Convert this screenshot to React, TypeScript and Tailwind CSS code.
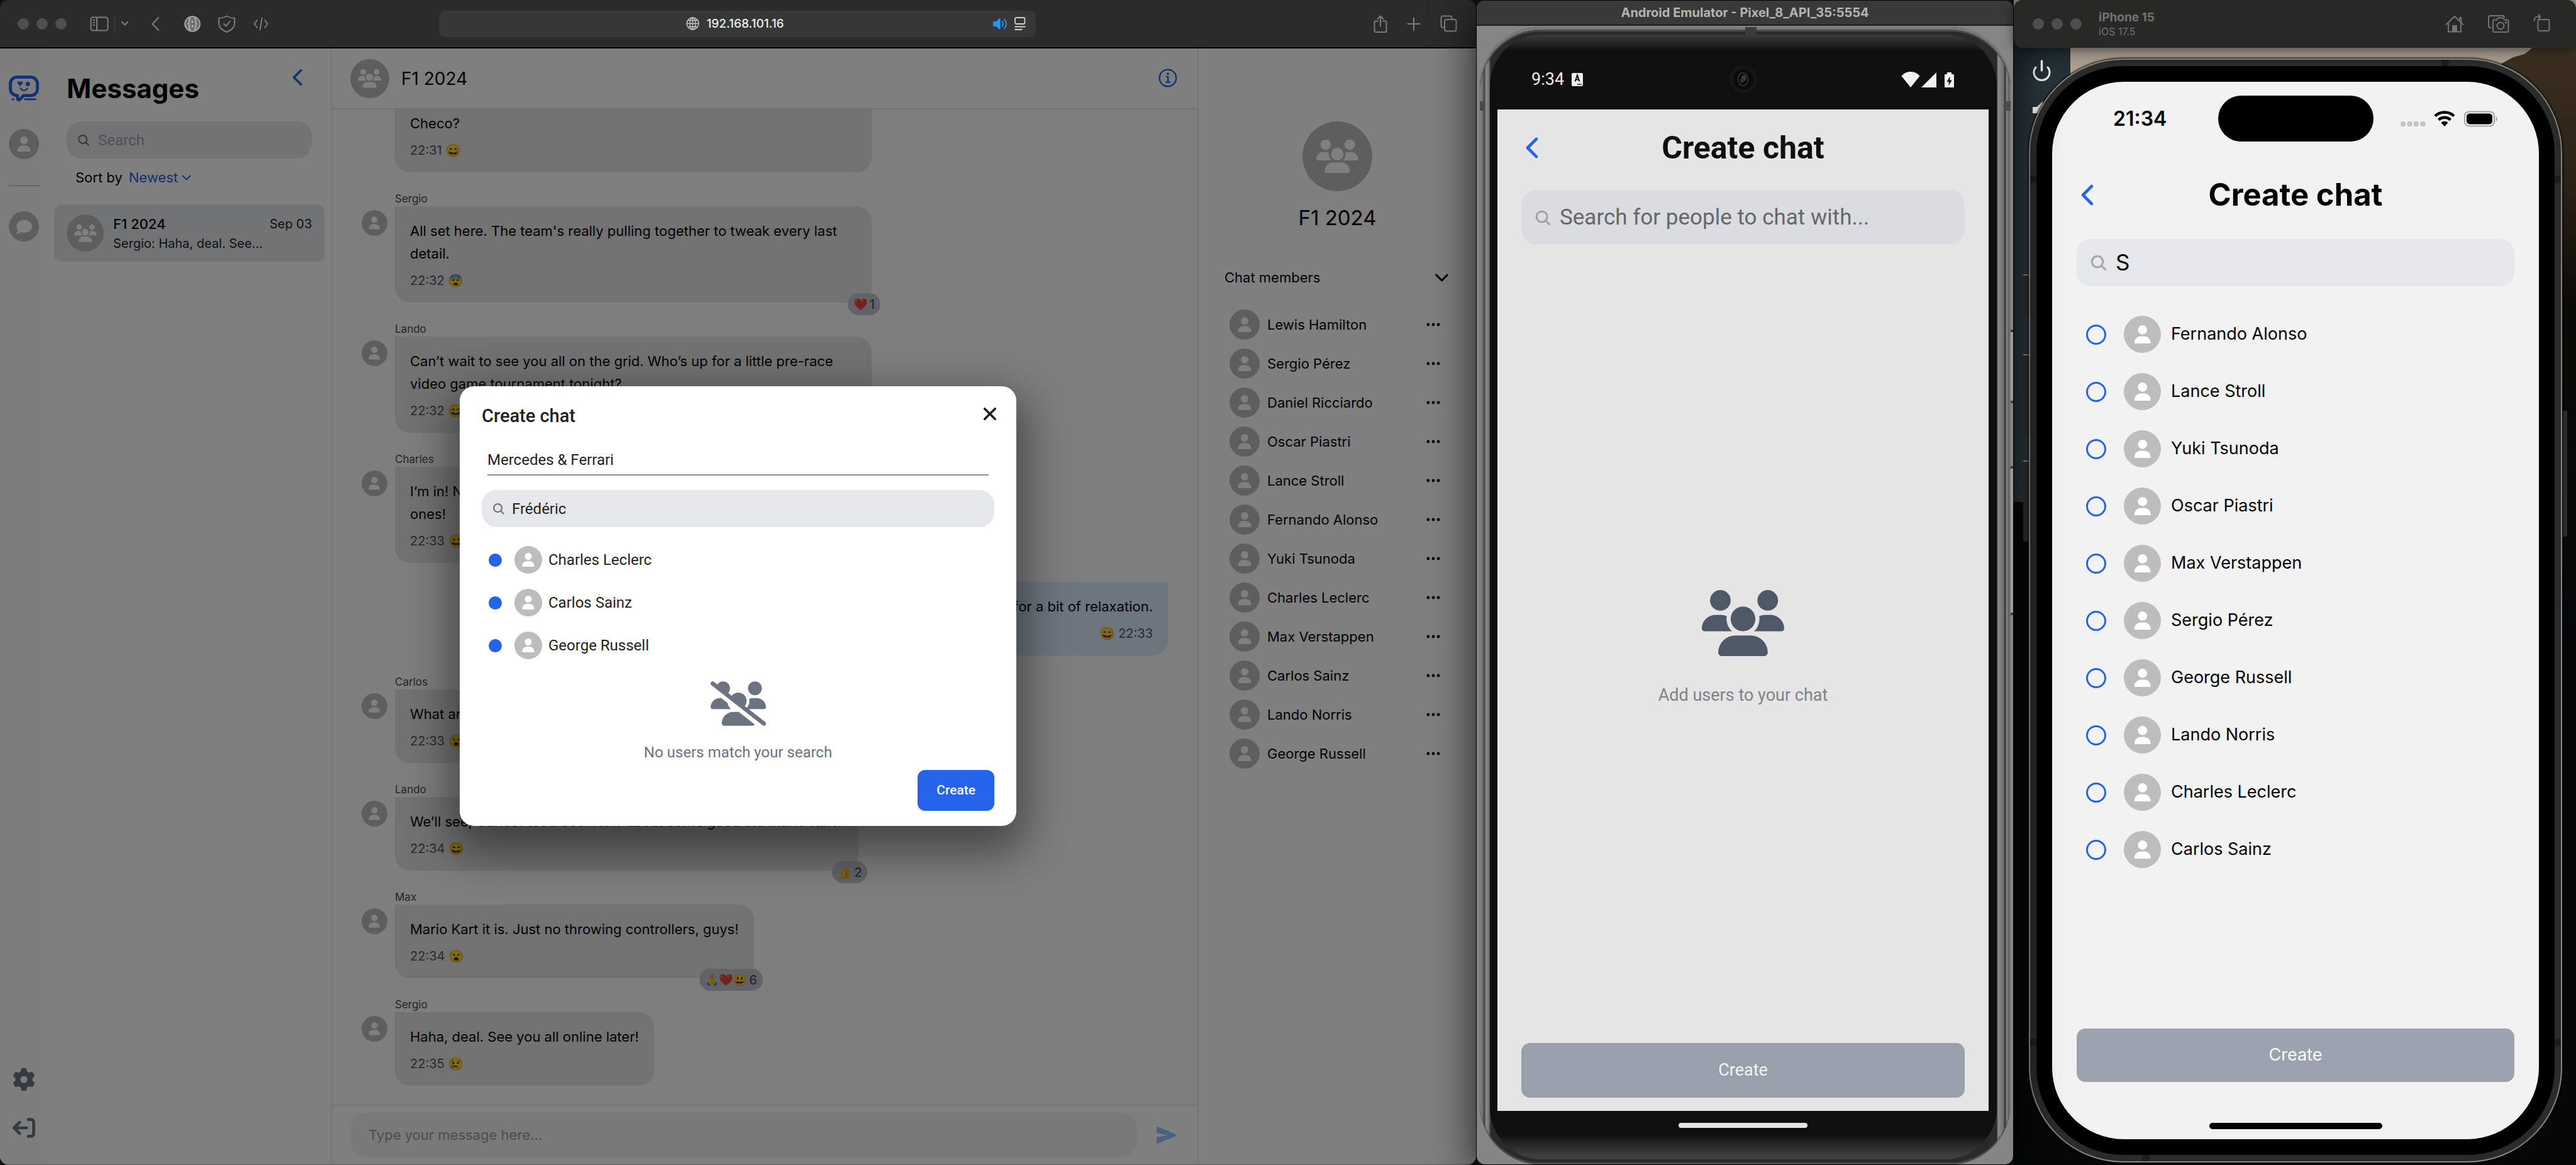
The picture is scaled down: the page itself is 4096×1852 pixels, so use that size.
import React from "react";
import { FaUser, FaUsers, FaUsersSlash, FaGear, FaComment } from "react-icons/fa6";
import {
  IoChevronBack,
  IoChevronDown,
  IoSearch,
  IoClose,
  IoInformationCircleOutline,
  IoSend,
} from "react-icons/io5";
import { BsThreeDots } from "react-icons/bs";

const SANS = "font-['Inter','Liberation_Sans',sans-serif]";
const ROBOTO = "font-['Roboto','Liberation_Sans',sans-serif]";

function Avatar({ size, children }: { size: string; children?: React.ReactNode }) {
  return (
    <span className={`flex shrink-0 items-center justify-center rounded-full bg-[#bdbdbd] text-white ${size}`}>
      {children ?? <FaUser className="h-1/2 w-1/2" />}
    </span>
  );
}

function GroupAvatar({ size }: { size: string }) {
  return (
    <Avatar size={size}>
      <FaUsers className="h-[60%] w-[60%]" />
    </Avatar>
  );
}

function TrafficLights({ color }: { color: string }) {
  return (
    <div className="flex gap-3">
      {[0, 1, 2].map((i) => (
        <span key={i} className={`size-[18px] rounded-full ${color}`} />
      ))}
    </div>
  );
}

/* ---------- Browser ---------- */

function BrowserToolbar() {
  return (
    <header className="flex h-[77px] shrink-0 items-center justify-between rounded-t-[14px] border-b-2 border-black bg-[#2b2b2b] text-[#7c7c7c]">
      <div className="flex flex-1 items-center pl-7">
        <TrafficLights color="bg-[#4f4f4f]" />
        <button aria-label="Show sidebar" className="ml-[37px]">
          <svg className="h-[24px] w-[30px]" viewBox="0 0 30 24" fill="none" stroke="currentColor" strokeWidth="2">
            <rect x="1.5" y="1.5" width="27" height="21" rx="3.5" />
            <path d="M11 1.5v21M4.5 6h3.5M4.5 10h3.5M4.5 14h3.5" />
          </svg>
        </button>
        <span className="ml-[9px] h-[26px] w-px bg-[#454545]" />
        <button aria-label="Tab groups" className="ml-[9px]">
          <svg className="h-[9px] w-[13px]" viewBox="0 0 13 9" fill="none" stroke="currentColor" strokeWidth="2.2" strokeLinecap="round" strokeLinejoin="round">
            <path d="M2 2l4.500 4.500L11 2" />
          </svg>
        </button>
        <button aria-label="Back" className="ml-[35px]">
          <svg className="h-[24px] w-[14px]" viewBox="0 0 14 24" fill="none" stroke="currentColor" strokeWidth="2.2" strokeLinecap="round" strokeLinejoin="round">
            <path d="M12 2L2.500 12l9.500 10" />
          </svg>
        </button>
        <button aria-label="Extension" className="ml-[39px]">
          <svg className="size-[26px]" viewBox="0 0 26 26" fill="none" stroke="currentColor">
            <circle cx="13" cy="13" r="12" stroke="#b4b4b4" strokeWidth="1.600" fill="#6f6f6f" />
            <path d="M10.500 4c-3 0-2.500 1.500-2.500 4.500S7.500 13 6 13c1.500 0 2 1.500 2 4.500s-.5 4.500 2.500 4.500M15.500 4c3 0 2.500 1.500 2.500 4.500s.5 4.500 2 4.500c-1.500 0-2 1.500-2 4.500s.5 4.500-2.500 4.500" stroke="#c2c2c2" strokeWidth="1.500" />
            <circle cx="13" cy="9.500" r="1.600" fill="#c2c2c2" stroke="none" />
            <circle cx="13" cy="16.500" r="1.600" fill="#c2c2c2" stroke="none" />
          </svg>
        </button>
        <button aria-label="Privacy report" className="ml-[27px]">
          <svg className="h-[28px] w-[29px]" viewBox="0 0 29 28" fill="none" stroke="currentColor" strokeWidth="2" strokeLinecap="round" strokeLinejoin="round">
            <path d="M14.500 1.500C18 3.500 22 4.500 27 5v8c0 6-5 11-12.500 14C7 24 2 19 2 13V5c5-.5 9-1.500 12.500-3.500z" />
            <path d="M10 14l3.500 3.500L19.500 10" />
          </svg>
        </button>
        <button aria-label="Developer tools" className="ml-7">
          <svg className="h-[22px] w-[24px]" viewBox="0 0 24 22" fill="none" stroke="currentColor" strokeWidth="2" strokeLinecap="round" strokeLinejoin="round">
            <path d="M6 5L1.500 11 6 17M18 5l4.500 6L18 17M13.500 1.500l-3 19" />
          </svg>
        </button>
      </div>

      <div className="flex h-[42px] w-[40.4%] items-center rounded-[9px] bg-[#373737] pr-4">
        <div className="flex flex-1 items-center justify-center gap-[11px] pl-[58px]">
          <svg className="size-[21px] text-[#c9c9c9]" viewBox="0 0 21 21" fill="none" stroke="currentColor" strokeWidth="1.400">
            <circle cx="10.500" cy="10.500" r="9.500" />
            <ellipse cx="10.500" cy="10.500" rx="4.500" ry="9.500" />
            <path d="M10.500 1v19M1 10.500h19M2.500 5.500h16M2.500 15.500h16" />
          </svg>
          <span className="text-[19px] leading-6 font-medium text-[#ececec]">192.168.101.16</span>
        </div>
        <button aria-label="Mute tab" className="-ml-1 text-[#1e9bff]">
          <svg className="h-[22px] w-[24px]" viewBox="0 0 24 22" fill="currentColor">
            <path d="M1 8.500C1 7.500 1.500 7 2.500 7H6l5-4.500c1-.8 1.500-.4 1.500.7v15.600c0 1.100-.5 1.500-1.500.7L6 15H2.500C1.500 15 1 14.500 1 13.500z" />
            <path d="M15.500 7c2 2.500 2 5.500 0 8M19 4c4 4.500 4 9.500 0 14" fill="none" stroke="currentColor" strokeWidth="1.800" strokeLinecap="round" />
          </svg>
        </button>
        <button aria-label="Reader" className="ml-[11px] text-[#cfcfcf]">
          <svg className="h-[21px] w-[18px]" viewBox="0 0 18 21" fill="none" stroke="currentColor" strokeWidth="1.800">
            <rect x="1" y="1" width="15.500" height="10" rx="2" />
            <path d="M.5 15.500h17M.5 20h12" />
          </svg>
        </button>
      </div>

      <div className="flex flex-1 items-center justify-end gap-[31px] pr-[30px]">
        <button aria-label="Share">
          <svg className="h-[28px] w-[22px]" viewBox="0 0 22 28" fill="none" stroke="currentColor" strokeWidth="2" strokeLinecap="round" strokeLinejoin="round">
            <path d="M7 9.500H3.500c-1 0-2 1-2 2V25c0 1 1 2 2 2h15c1 0 2-1 2-2V11.500c0-1-1-2-2-2H15M11 18V2M6.500 6L11 1.500 15.500 6" />
          </svg>
        </button>
        <button aria-label="New tab">
          <svg className="size-[22px]" viewBox="0 0 22 22" fill="none" stroke="currentColor" strokeWidth="2.200" strokeLinecap="round">
            <path d="M11 1.500v19M1.500 11h19" />
          </svg>
        </button>
        <button aria-label="Tab overview">
          <svg className="size-[27px]" viewBox="0 0 27 27" fill="none" stroke="currentColor" strokeWidth="2">
            <path d="M6 19.500H4C2.500 19.500 1.500 18.500 1.500 17V4c0-1.500 1-2.500 2.500-2.500h12c1.500 0 2.500 1 2.500 2.500v2" />
            <rect x="7" y="7" width="18.500" height="18.500" rx="3" />
          </svg>
        </button>
      </div>
    </header>
  );
}

function Rail() {
  return (
    <nav className="flex w-[76px] shrink-0 flex-col items-center bg-[#fbfbfb] pt-[43px] pb-[41px]">
      <a href="#home" aria-label="Home" className="text-[#2563eb]">
        <svg className="h-[41px] w-[48px]" viewBox="0 0 192 163" fill="none" stroke="currentColor">
          <path d="M52 10H140a42 42 0 0 1 42 42V85a42 42 0 0 1-42 42H94L72 150c-6 7-17 4-17-6V127H52A42 42 0 0 1 10 85V52A42 42 0 0 1 52 10z" strokeWidth="19" strokeLinejoin="round" />
          <path d="M72 67L57 51c-7-8 4-18 12-12l3 3 3-3c8-6 19 4 12 12z" fill="currentColor" stroke="none" />
          <circle cx="121" cy="53" r="14" fill="currentColor" stroke="none" />
          <path d="M74 80c12 19 34 19 46 0" strokeWidth="8" strokeLinecap="round" />
          <path d="M23 151h7M103 151h66" strokeWidth="11" strokeLinecap="round" />
        </svg>
      </a>
      <a href="#profile" aria-label="Profile" className="mt-11">
        <Avatar size="size-[48px]" />
      </a>
      <span className="mt-[41px] h-[2px] w-[49px] bg-[#c9ccd4]" />
      <a href="#chats" aria-label="Chats" className="mt-10">
        <Avatar size="size-[48px]">
          <FaComment className="size-[25px]" />
        </Avatar>
      </a>
      <button aria-label="Settings" className="mt-auto text-[#6b7280]">
        <FaGear className="size-[36px]" />
      </button>
      <button aria-label="Log out" className="mt-[43px] text-[#6b7280]">
        <svg className="h-[32px] w-[36px]" viewBox="0 0 145 127" fill="none" stroke="currentColor" strokeWidth="19" strokeLinecap="round" strokeLinejoin="round">
          <path d="M100 9.500h18a17 17 0 0 1 17 17v74a17 17 0 0 1-17 17h-18M90 63.500H10M45 28L9.500 63.500 45 99" />
        </svg>
      </button>
    </nav>
  );
}

function Conversations() {
  return (
    <aside className="flex w-[452px] shrink-0 flex-col border-r-2 border-[#ececec] bg-white px-[10px]">
      <div className="flex items-start justify-between px-5 pt-[26px]">
        <h1 className="pt-3 text-[42px] leading-[52px] font-bold">Messages</h1>
        <button aria-label="Collapse" className="pr-[3px] text-[#2563eb]">
          <IoChevronBack className="size-[40px]" />
        </button>
      </div>
      <label className={`mx-5 mt-[26px] flex h-[59px] items-center gap-3 rounded-[24px] bg-[#e5e7eb] pl-4 ${ROBOTO}`}>
        <IoSearch className="size-[22px] text-[#757575]" />
        <input aria-label="Search" placeholder="Search" className="min-w-0 flex-1 bg-transparent text-[24px] outline-none placeholder:text-[#9ca3af]" />
      </label>
      <div className="mt-4 flex items-center gap-[10px] px-[34px] text-[22px] leading-7">
        <span>Sort by</span>
        <button className="flex items-center gap-[3px] text-[#2563eb]">
          Newest
          <IoChevronDown className="size-[21px]" />
        </button>
      </div>
      <a href="#f1" className="mt-[29px] flex h-[91px] items-center gap-[15px] rounded-[12px] bg-[#e5e7eb] px-5">
        <GroupAvatar size="size-[59px]" />
        <span className="flex flex-1 flex-col">
          <span className="flex justify-between text-[22px] leading-8">
            <span className="font-medium">F1 2024</span>
            <span className="text-[20px] text-[#1f1f1f]">Sep 03</span>
          </span>
          <span className="text-[20px] leading-[30px] text-[#1f1f1f]">Sergio: Haha, deal. See...</span>
        </span>
      </a>
    </aside>
  );
}

type Message = {
  own?: boolean;
  author?: string;
  text: string;
  time: string;
  mood: string;
  reactions?: string;
  count?: number;
};

const messages: Message[] = [
  { text: "Hello all! The car felt solid in the sim. How are things at Red Bull, Checo?", time: "22:31", mood: "😄" },
  { author: "Sergio", text: "All set here. The team's really pulling together to tweak every last detail.", time: "22:32", mood: "😨", reactions: "❤️", count: 1 },
  { author: "Lando", text: "Can’t wait to see you all on the grid. Who’s up for a little pre-race video game tournament tonight?", time: "22:32", mood: "😄" },
  { author: "Charles", text: "I’m in! No better way to unwind before the big races than the small ones!", time: "22:33", mood: "😄" },
  { own: true, text: "Count me in, I could use the games for a bit of relaxation.", time: "22:33", mood: "😄" },
  { author: "Carlos", text: "What are we playing tonight?", time: "22:33", mood: "😮" },
  { author: "Lando", text: "We’ll see, Carlos. We’ll see. How about some good old Mario Kart?", time: "22:34", mood: "😄", reactions: "👍", count: 2 },
  { author: "Max", text: "Mario Kart it is. Just no throwing controllers, guys!", time: "22:34", mood: "😮", reactions: "🙏❤️😃", count: 6 },
  { author: "Sergio", text: "Haha, deal. See you all online later!", time: "22:35", mood: "😢" },
];

function MessageRow({ m }: { m: Message }) {
  if (m.own) {
    return (
      <div className="ml-auto max-w-[758px] rounded-[24px] rounded-tr-none bg-[#dbeafe] px-6 pt-[21px] pb-5">
        <p className="text-[22px] leading-9">{m.text}</p>
        <p className="mt-[10px] text-right text-[20px] leading-[30px] text-[#4b5563]">
          {m.mood} {m.time}
        </p>
      </div>
    );
  }
  return (
    <div className="flex items-start gap-3">
      <span className="mt-[30px] w-[41px] shrink-0">{m.author && <Avatar size="size-[41px]" />}</span>
      <div className="flex flex-col items-start">
        {m.author && <span className="text-[17px] leading-6 text-[#4b4b4b]">{m.author}</span>}
        <div className="relative max-w-[758px] rounded-[24px] rounded-tl-none bg-[#e5e5e5] px-6 pt-[21px] pb-5">
          <p className="text-[22px] leading-9">{m.text}</p>
          <p className="mt-[10px] text-[20px] leading-[30px] text-[#4b5563]">
            {m.time} {m.mood}
          </p>
          {m.reactions && (
            <span className="absolute -right-[14px] -bottom-5 flex h-[35px] items-center gap-1 rounded-full bg-[#c3c6d0] px-[9px] text-[20px] text-[#374151]">
              <span className="text-[18px]">{m.reactions}</span>
              <span>{m.count}</span>
            </span>
          )}
        </div>
      </div>
    </div>
  );
}

function Chat() {
  return (
    <main className="flex min-w-0 flex-1 flex-col bg-[#fcfcfc]">
      <header className="flex h-[97px] shrink-0 items-center border-b-2 border-[#e5e5e5] bg-white pr-7 pl-[29px]">
        <GroupAvatar size="size-[62px]" />
        <h2 className="ml-[19px] flex-1 text-[28px]">F1 2024</h2>
        <button aria-label="Chat info" className="text-[#2563eb]">
          <IoInformationCircleOutline className="size-[37px]" />
        </button>
      </header>
      <div className="flex min-h-0 flex-1 flex-col justify-end gap-[30px] overflow-hidden pr-[47px] pb-[30px] pl-[47px]">
        {messages.map((m, i) => (
          <MessageRow key={i} m={m} />
        ))}
      </div>
      <footer className="flex h-[94px] shrink-0 items-center border-t-2 border-[#e5e5e5] bg-white pr-[33px] pl-[30px]">
        <input
          aria-label="Message"
          placeholder="Type your message here..."
          className="h-[70px] min-w-0 flex-1 rounded-[24px] bg-[#f3f3f3] px-7 text-[22px] outline-none placeholder:text-[#9a9a9a]"
        />
        <button aria-label="Send" className="ml-[30px] text-[#93c5fd]">
          <IoSend className="size-[33px]" />
        </button>
      </footer>
    </main>
  );
}

const members = [
  "Lewis Hamilton", "Sergio Pérez", "Daniel Ricciardo", "Oscar Piastri", "Lance Stroll", "Fernando Alonso",
  "Yuki Tsunoda", "Charles Leclerc", "Max Verstappen", "Carlos Sainz", "Lando Norris", "George Russell",
];

function Details() {
  return (
    <aside className="flex w-[443px] shrink-0 flex-col items-center border-l-2 border-[#ececec] bg-white pt-[116px]">
      <GroupAvatar size="size-[111px]" />
      <h2 className="mt-[22px] text-[33px] leading-[40px]">F1 2024</h2>
      <button className="mt-[57px] flex w-full items-center justify-between pr-[39px] pl-[41px] text-[22px] leading-9">
        Chat members
        <IoChevronDown className="size-[31px]" />
      </button>
      <ul className="mt-[26px] w-full pr-[55px] pl-[49px]">
        {members.map((name) => (
          <li key={name} className="flex h-[62px] items-center text-[22px]">
            <Avatar size="size-[48px]" />
            <span className="ml-3 flex-1">{name}</span>
            <button aria-label={`Options for ${name}`}>
              <BsThreeDots className="size-[26px]" />
            </button>
          </li>
        ))}
      </ul>
    </aside>
  );
}

function CreateChatDialog() {
  return (
    <div className="absolute inset-0 flex items-center justify-center bg-black/50">
      <div
        role="dialog"
        aria-label="Create chat"
        className={`flex w-[885px] flex-col rounded-[23px] bg-white px-[35px] pt-7 pb-6 text-[#1f1f1f] shadow-[0_28px_70px_14px_rgba(0,0,0,0.45)] ${ROBOTO}`}
      >
        <div className="flex h-10 items-center justify-between">
          <h2 className="text-[29px] font-medium">Create chat</h2>
          <button aria-label="Close" className="-mt-2 -mr-3">
            <IoClose className="size-[38px]" />
          </button>
        </div>
        <input aria-label="Chat name" defaultValue="Mercedes & Ferrari" className="mx-[9px] mt-[26px] h-12 border-b-2 border-[#8e8e8e] text-[24px] outline-none" />
        <label className="mt-[23px] flex h-[59px] items-center gap-[10px] rounded-[24px] bg-[#e5e7eb] pl-4">
          <IoSearch className="size-[22px] text-[#757575]" />
          <input aria-label="Search users" defaultValue="Frédéric" className="min-w-0 flex-1 bg-transparent text-[24px] outline-none" />
        </label>
        <ul className="mt-[18px]">
          {["Charles Leclerc", "Carlos Sainz", "George Russell"].map((name) => (
            <li key={name}>
              <label className="flex h-[68px] items-center pl-[11px] text-[24px]">
                <input type="checkbox" defaultChecked className="size-[21px] appearance-none rounded-full border-[3px] border-[#2563eb] checked:bg-[#2563eb]" />
                <span className="mr-[10px] ml-5">
                  <Avatar size="size-[44px]" />
                </span>
                {name}
              </label>
            </li>
          ))}
        </ul>
        <div className="mt-[23px] flex flex-col items-center text-[#6b7280]">
          <FaUsersSlash className="h-[71px] w-[88px]" />
          <p className="mt-[26px] text-[24px] leading-8">No users match your search</p>
        </div>
        <button className="mt-3 h-[65px] self-end rounded-[12px] bg-[#2563eb] px-[30px] text-[21px] font-medium text-white">Create</button>
      </div>
    </div>
  );
}

function BrowserWindow() {
  return (
    <section className={`flex min-w-0 flex-col overflow-hidden rounded-b-[14px] border-b-2 border-[#6b6b6b] text-black ${SANS}`}>
      <BrowserToolbar />
      <div className="relative flex min-h-0 flex-1 overflow-hidden">
        <Rail />
        <Conversations />
        <Chat />
        <Details />
        <CreateChatDialog />
      </div>
    </section>
  );
}

/* ---------- Android ---------- */

function AndroidWindow() {
  return (
    <section className={`relative z-10 flex min-w-0 flex-col overflow-hidden rounded-[14px] border border-black bg-[#858585] shadow-[0_20px_70px_rgba(0,0,0,0.75)] ${ROBOTO}`}>
      <header className={`flex h-10 shrink-0 items-center justify-center border-b-2 border-[#1c1c1c] bg-[#393939] pb-px text-[20px] leading-6 font-bold text-[#b3b3b3] ${SANS}`}>
        Android Emulator - Pixel_8_API_35:5554
      </header>
      <span className="absolute top-[523px] right-0 h-[117px] w-[6px] rounded-l-[2px] border-y-4 border-[#3c3c3c] bg-[#9d9d9d]" />
      <span className="absolute top-[740px] right-0 h-[237px] w-[6px] rounded-l-[2px] border-y-4 border-[#3c3c3c] bg-[#9d9d9d]" />
      <div className="relative mt-[2px] mr-1 ml-[5px] flex min-h-0 flex-1 flex-col rounded-[96px] bg-[linear-gradient(90deg,#8c8c8c_0px,#6a6a6a_5px,#3d3d3d_7px,#8c8c8c_10px,#6d6d6d_15px,#2a2a2a_17px,#2a2a2a_calc(100%-22px),#8c8c8c_calc(100%-20px),#6e6e6e_calc(100%-11px),#2a2a2a_calc(100%-9px),#8a8a8a_calc(100%-6px),#5c5c5c_calc(100%-3px),#8c8c8c_100%)] pt-3 pr-[22px] pb-[8px] pl-4 shadow-[inset_0_4px_1px_#7a7a7a,inset_0_7px_1px_#4c4c4c,inset_0_-3px_1px_#4c4c4c]">
        <span className="absolute top-0 left-1/2 h-[12px] w-[18px] bg-[#3c3c3c]" />
        <span className="absolute top-[118px] left-0 h-[15px] w-[7px] bg-[#4a4a4a]" />
        <span className="absolute top-[118px] right-0 h-[15px] w-[7px] bg-[#4a4a4a]" />
        <div className="relative flex min-h-0 flex-1 flex-col rounded-[82px] bg-[linear-gradient(180deg,#3b3b3b_0px,#0f0f0f_26px,#0f0f0f_calc(100%-40px),#3f3f3f_calc(100%-6px))] pt-[23px] pr-[13px] pb-[31px] pl-3">
          <div className="flex h-24 shrink-0 items-center px-[54px] text-[27px] text-[#ededed]">
            <div className="flex flex-1 items-center gap-3">
              9:34
              <svg className="h-[27px] w-[18px]" viewBox="0 0 18 27">
                <rect y="3" width="18" height="21" rx="2" fill="#ededed" />
                <path d="M5.500 16.500L9 6.500l3.500 10M6.500 13.500h5" stroke="#0f0f0f" strokeWidth="2" fill="none" />
                <path d="M9 21h7" stroke="#0f0f0f" strokeWidth="1.800" strokeDasharray="1.600 1" />
              </svg>
            </div>
            <svg className="size-[46px]" viewBox="0 0 46 46">
              <circle cx="23" cy="23" r="22.500" fill="#151515" />
              <circle cx="23" cy="23" r="17" fill="#0b0b0b" stroke="#1e1e1e" />
              <ellipse cx="22.500" cy="23" rx="8" ry="10" fill="#050505" stroke="#3a3a38" strokeWidth="1.500" />
              <ellipse cx="24" cy="21" rx="4" ry="5" fill="#4a2d47" />
              <ellipse cx="21" cy="25" rx="3.500" ry="4" fill="#3a2f10" />
            </svg>
            <div className="flex flex-1 items-center justify-end">
              <svg className="h-[25px] w-[85px]" viewBox="0 0 85 25" fill="#f1f1f1">
                <path d="M15 25L0.500 7C4 2.500 9 0 15 0s11 2.500 14.500 7z" />
                <path d="M32 25L56 1v24z" />
                <path d="M69 5.500c0-1 .6-1.500 1.500-1.500H73V1h7v3h2.500c.9 0 1.500.5 1.500 1.500v18c0 1-.6 1.500-1.500 1.500h-12c-.9 0-1.500-.5-1.500-1.500z" />
                <path d="M77.500 7.500L72.500 16h3.200v6l5-8.500h-3.200z" fill="#0f0f0f" />
              </svg>
            </div>
          </div>

          <div className="flex min-h-0 flex-1 flex-col bg-[#e5e5e5] px-[38px] pb-[21px] text-[#0f0f0f]">
            <header className="mt-[31px] grid h-[60px] grid-cols-[1fr_auto_1fr] items-center">
              <button aria-label="Back" className="-ml-2 justify-self-start text-[#2b62e3]">
                <IoChevronBack className="size-[50px]" />
              </button>
              <h2 className="text-[50px] leading-[60px] font-bold">Create chat</h2>
            </header>
            <label className="mt-[37px] flex h-[87px] shrink-0 items-center gap-3 rounded-[24px] bg-[#dadce0] pt-[2px] pl-5">
              <IoSearch className="size-[29px] text-[#9d9fa3]" />
              <input aria-label="Search for people" placeholder="Search for people to chat with..." className="min-w-0 flex-1 bg-transparent text-[35px] outline-none placeholder:text-[#66676a]" />
            </label>
            <div className="flex flex-1 flex-col items-center justify-center pt-3">
              <FaUsers className="h-[105px] w-[131px] text-[#4f5866]" />
              <p className="mt-[46px] text-[27px] leading-8 text-[#808288]">Add users to your chat</p>
            </div>
            <button className="h-[87px] shrink-0 rounded-[14px] bg-[#9a9fac] text-[27px] text-[#f3f3f3]">Create</button>
          </div>
          <div className="flex h-[46px] shrink-0 items-center justify-center">
            <span className="h-2 w-[205px] rounded-full bg-[#e5e5e5]" />
          </div>
        </div>
      </div>
    </section>
  );
}

/* ---------- iPhone ---------- */

const people = [
  "Fernando Alonso", "Lance Stroll", "Yuki Tsunoda", "Oscar Piastri", "Max Verstappen",
  "Sergio Pérez", "George Russell", "Lando Norris", "Charles Leclerc", "Carlos Sainz",
];

function Wallpaper() {
  return (
    <svg className="absolute inset-0 h-full w-full" viewBox="0 0 894 1852" preserveAspectRatio="none" aria-hidden="true">
      <defs>
        <linearGradient id="sky" x1="0" y1="0" x2="0" y2="1">
          <stop offset="0" stopColor="#8d8176" />
          <stop offset="0.5" stopColor="#b5a999" />
          <stop offset="1" stopColor="#bdb3a4" />
        </linearGradient>
        <linearGradient id="hill" x1="0" y1="0" x2="0" y2="1">
          <stop offset="0" stopColor="#3b3020" />
          <stop offset="0.25" stopColor="#2b2116" />
          <stop offset="0.45" stopColor="#0b0906" />
          <stop offset="1" stopColor="#05080a" />
        </linearGradient>
        <linearGradient id="strip" x1="0" y1="0" x2="0" y2="1">
          <stop offset="0" stopColor="#1c262c" />
          <stop offset="0.1" stopColor="#27343b" />
          <stop offset="1" stopColor="#27343b" />
        </linearGradient>
      </defs>
      <rect width="894" height="1852" fill="#060708" />
      <rect width="894" height="40" fill="#9a8f84" />
      <rect y="60" width="880" height="120" fill="url(#sky)" />
      <path d="M740 118l34-16 20-11 18-5 14-11 68-15V1000H700V200z" fill="url(#hill)" />
      <rect y="60" width="90" height="738" fill="url(#strip)" />
      <rect x="15" y="436" width="12" height="65" rx="2" fill="#2c2c2c" />
      <rect x="15" y="564" width="12" height="129" rx="2" fill="#2c2c2c" />
      <rect x="15" y="733" width="12" height="128" rx="2" fill="#2c2c2c" />
      <path d="M15 437h10M15 564h10M15 733h10" stroke="#8a8a8a" strokeWidth="2" />
      <rect x="870" y="653" width="10" height="200" rx="2" fill="#2c2c2c" />
      <path d="M35 107a12.500 12.500 0 1 0 19 0" fill="none" stroke="#f2f2f2" strokeWidth="3" strokeLinecap="round" />
      <path d="M44.500 97v15" stroke="#f2f2f2" strokeWidth="3.500" strokeLinecap="round" />
      <path d="M30 170h7l9-9v24l-9-5h-7z" fill="#f2f2f2" />
    </svg>
  );
}

function SimulatorToolbar() {
  return (
    <header className="relative z-10 flex h-[76px] shrink-0 items-center rounded-[14px] bg-[#282827] pr-[41px] pl-[30px] text-[#737373] shadow-[0_2px_18px_rgba(0,0,0,0.5)]">
      <TrafficLights color="bg-[#4e4e4d]" />
      <div className="ml-[27px] flex flex-1 flex-col">
        <span className="text-[19px] leading-6 font-bold">iPhone 15</span>
        <span className="text-[16px] leading-5">iOS 17.5</span>
      </div>
      <div className="flex items-center gap-[38px]">
        <button aria-label="Home">
          <svg className="size-[30px]" viewBox="0 0 30 28" fill="none" stroke="currentColor" strokeWidth="2" strokeLinejoin="round" strokeLinecap="round">
            <path d="M1.500 15L15 2l13.500 13M5 13v13.500h20V13M23 8V4h2.500v7" />
            <path d="M12 26v-9h6v9z" fill="currentColor" />
          </svg>
        </button>
        <button aria-label="Screenshot">
          <svg className="h-[28px] w-[34px]" viewBox="0 0 34 28" fill="none" stroke="currentColor" strokeWidth="2" strokeLinejoin="round">
            <path d="M5 20H4c-1.500 0-3-1-3-3V4c0-2 1-3 3-3h19c2 0 3 1 3 3" />
            <path d="M8 10c0-1.500 1-2.500 2.500-2.500H14l2-3h8l2 3h4c1.500 0 2.500 1 2.500 2.500v14.500c0 1.500-1 2.500-2.500 2.500H10.500C9 27 8 26 8 24.500z" />
            <circle cx="20" cy="17" r="5.500" />
            <circle cx="28.500" cy="12" r="0.800" fill="currentColor" />
          </svg>
        </button>
        <button aria-label="Rotate" className="-mt-1">
          <svg className="h-[28px] w-[27px]" viewBox="0 0 27 28" fill="none" stroke="currentColor" strokeWidth="2" strokeLinejoin="round" strokeLinecap="round">
            <rect x="7.500" y="9" width="18" height="18" rx="2.500" />
            <path d="M1.500 11c0-4 2-6.500 6-6.500h4M8.500 1.500l3 3-3 3" />
          </svg>
        </button>
      </div>
    </header>
  );
}

function IPhoneWindow() {
  return (
    <section className={`relative flex min-w-0 flex-col text-black ${SANS}`}>
      <Wallpaper />
      <SimulatorToolbar />
      <div className="relative mt-[17px] mr-[22px] mb-1 ml-6 flex min-h-0 flex-1 flex-col rounded-[150px] border-2 border-[#868686] bg-[#2b2b2b] p-[10px] shadow-[0_0_3px_1px_#000]">
        <span className="absolute top-[184px] left-0 h-[12px] w-[10px] bg-[#1d1d1d]" />
        <span className="absolute top-[184px] right-0 h-[12px] w-[10px] bg-[#1d1d1d]" />
        <span className="absolute bottom-[183px] left-0 h-[12px] w-[10px] bg-[#1d1d1d]" />
        <span className="absolute right-0 bottom-[183px] h-[12px] w-[10px] bg-[#1d1d1d]" />
        <span className="absolute top-0 right-[178px] h-[10px] w-[12px] bg-[#1d1d1d]" />
        <span className="absolute bottom-0 left-[178px] h-[10px] w-[12px] bg-[#1d1d1d]" />
        <div className="flex min-h-0 flex-1 flex-col rounded-[138px] bg-black p-[25px]">
          <div className="flex min-h-0 flex-1 flex-col rounded-[114px] bg-[#f2f2f2] pb-4">
            <div className="mt-[22px] grid h-[73px] shrink-0 grid-cols-[1fr_auto_1fr] items-center">
              <span className="pl-[97px] text-[32px] font-semibold">21:34</span>
              <span className="h-[73px] w-[247px] rounded-full bg-black" />
              <span className="flex justify-end pr-[64px]">
                <svg className="h-[26px] w-[156px]" viewBox="0 0 156 26">
                  <g fill="#c4c4c4">
                    <rect x="0" y="17" width="8" height="8" rx="3" />
                    <rect x="10.500" y="17" width="8" height="8" rx="3" />
                    <rect x="21" y="17" width="8" height="8" rx="3" />
                    <rect x="31.500" y="17" width="8" height="8" rx="3" />
                  </g>
                  <g fill="none" stroke="#000" strokeWidth="4.400">
                    <path d="M55 8.500c8-8 22-8 30 0" />
                    <path d="M60.500 14.500c5.500-5 13.500-5 19 0" />
                  </g>
                  <path d="M70 25l-5.500-6c3-3 8-3 11 0z" />
                  <rect x="102" y="1.500" width="47" height="23" rx="7" fill="none" stroke="#a6a6a6" strokeWidth="2" />
                  <rect x="105" y="4.500" width="41" height="17" rx="5" />
                  <path d="M151.500 9c3 1 3 7 0 8z" fill="#a6a6a6" />
                </svg>
              </span>
            </div>
            <div className="flex min-h-0 flex-1 flex-col px-[39px]">
              <header className="mt-[55px] grid h-[60px] grid-cols-[1fr_auto_1fr] items-center">
                <button aria-label="Back" className="-ml-2 justify-self-start text-[#2563eb]">
                  <IoChevronBack className="size-[50px]" />
                </button>
                <h2 className="text-[49px] leading-[60px] font-bold">Create chat</h2>
              </header>
              <label className="mt-10 flex h-[75px] shrink-0 items-center gap-3 rounded-[22px] bg-[#e5e7eb] pl-5">
                <IoSearch className="size-[30px] text-[#a3a5a8]" />
                <input aria-label="Search people" defaultValue="S" className="min-w-0 flex-1 bg-transparent text-[35px] outline-none" />
              </label>
              <ul className="mt-[31px]">
                {people.map((name) => (
                  <li key={name}>
                    <label className="flex h-[91px] items-center pl-[15px] text-[27px]">
                      <input type="checkbox" className="size-8 appearance-none rounded-full border-[3px] border-[#2563eb]" />
                      <span className="mr-4 ml-7">
                        <Avatar size="size-[59px]" />
                      </span>
                      {name}
                    </label>
                  </li>
                ))}
              </ul>
              <button className="mt-auto h-[85px] shrink-0 rounded-[14px] bg-[#9ca3af] text-[27px] text-white">Create</button>
            </div>
            <span className="mt-[65px] h-[10px] w-[275px] shrink-0 self-center rounded-full bg-black" />
          </div>
        </div>
      </div>
    </section>
  );
}

export default function App() {
  return (
    <div className="grid h-screen grid-cols-[2347fr_855fr_894fr] overflow-hidden bg-[#15120f]">
      <BrowserWindow />
      <AndroidWindow />
      <IPhoneWindow />
    </div>
  );
}
